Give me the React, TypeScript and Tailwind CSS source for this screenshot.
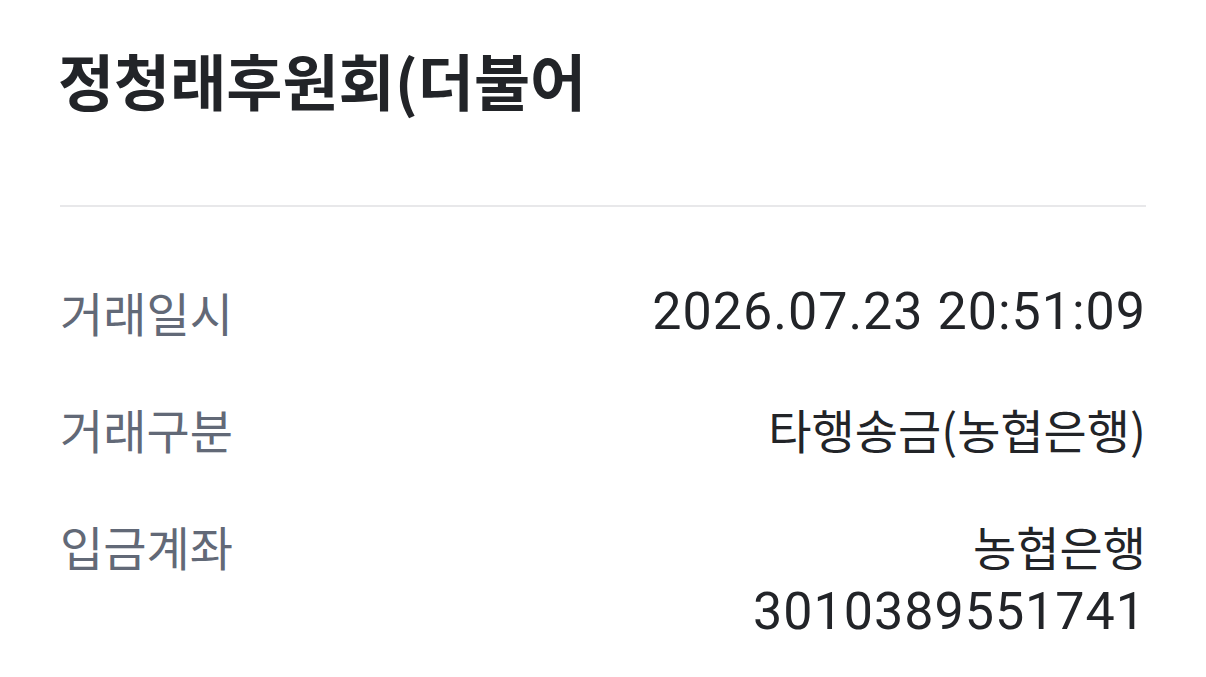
import React from 'react';

interface DetailRow {
    label: string;
    lines: string[];
}

const rows: DetailRow[] = [
    { label: '거래일시', lines: ['2026.07.23 20:51:09'] },
    { label: '거래구분', lines: ['타행송금(농협은행)'] },
    { label: '입금계좌', lines: ['농협은행', '3010389551741'] },
];

const krFont = { fontFamily: '"Noto Sans CJK KR", "Noto Sans", sans-serif' };
const numFont = { fontFamily: 'Roboto, "Noto Sans CJK KR", sans-serif' };

// numbers get the Latin face, hangul keeps the CJK one
const isNumeric = (text: string) => /^[\d.: ]+$/.test(text);

const Row = ({ row }: { row: DetailRow }) => {
    return (
        <div className="flex justify-between items-start">
            <div className="text-[47px] leading-[66px] text-[#626977]">{row.label}</div>
            <div className="flex flex-col items-end">
                {row.lines.map(line => (
                    isNumeric(line) ? (
                        <div key={line} className="text-[52px] leading-[66px] tracking-[1px] text-[#222428]" style={numFont}>
                            {line}
                        </div>
                    ) : (
                        <div key={line} className="text-[47px] leading-[66px] text-[#222428]">
                            {line}
                        </div>
                    )
                ))}
            </div>
        </div>
    );
};

const App = () => {
    return (
        <div className="w-[1206px] h-[677px] bg-white overflow-hidden px-[60px]" style={krFont}>
            <div className="pt-[40px] text-[61px] leading-[80px] font-bold text-[#222428] -ml-[2px]">
                정청래후원회(더불어
            </div>
            <div className="mt-[85px] h-[2px] bg-[#e8e8ea]" />
            <div className="mt-[72px] flex flex-col gap-[51px]">
                {rows.map(row => (
                    <Row key={row.label} row={row} />
                ))}
            </div>
        </div>
    );
};

export default App;
